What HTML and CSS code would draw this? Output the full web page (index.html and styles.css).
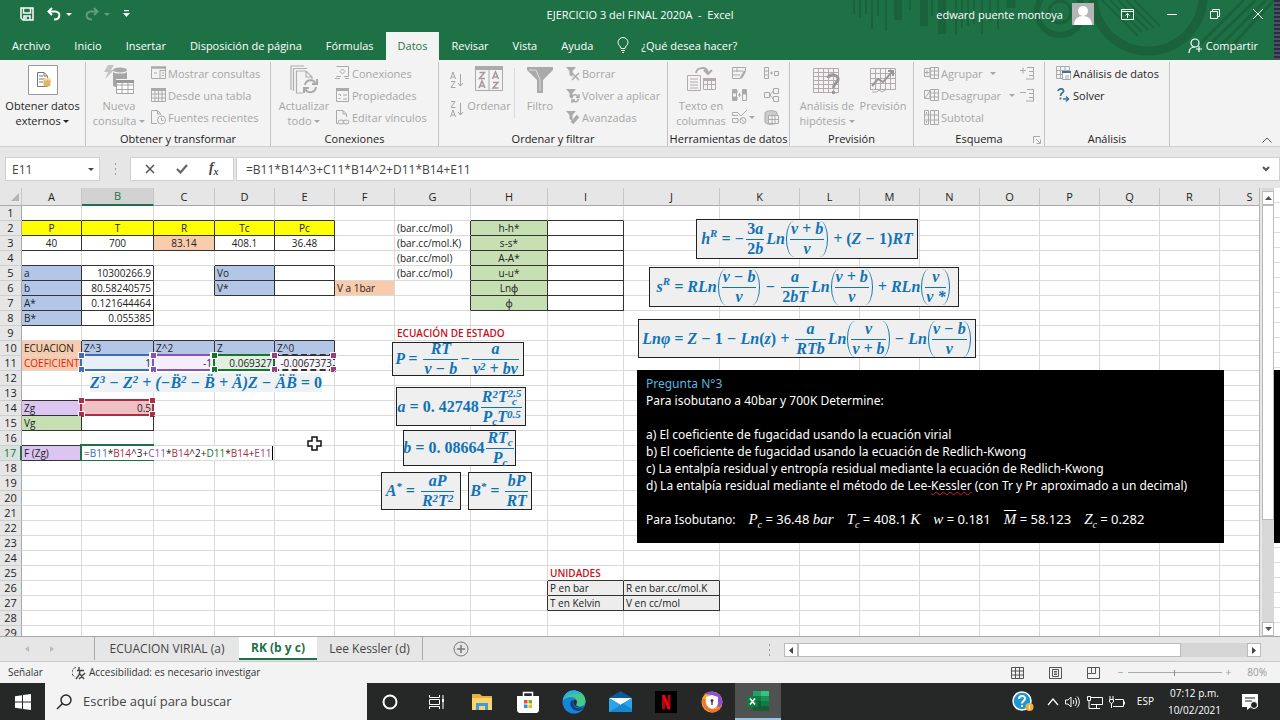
FILE: index.html
```html
<!DOCTYPE html>
<html lang="es">
<head>
<meta charset="utf-8">
<title>EJERCICIO 3 del FINAL 2020A - Excel</title>
<link rel="stylesheet" href="styles.css">
</head>
<body>
<header class="top">
  <svg class="pattern" width="440" height="60" viewBox="0 0 440 60" fill="none" stroke="#1a623b">
    <path d="M14 0V14M20 0V18M26 0V14M32 0V29M38 0V16M46 0V31" stroke-width="2"/>
    <path d="M58 0V20M84 0V26M102 0V34" stroke-width="8"/>
    <path d="M70 0V10M92 0V16M116 0V35M122 0V28M128 0V26M134 0V24M142 0V34M150 0V22M158 0V29" stroke-width="2"/>
    <path d="M171 0V8" stroke-width="9"/>
    <circle cx="220" cy="12" r="23" stroke-width="6"/><circle cx="220" cy="12" r="11" stroke-width="3"/>
    <circle cx="308" cy="-4" r="55" stroke-width="9"/><path d="M262 0L298 36M270 0L302 32M278 0L308 30M286 0L314 28M294 0L320 26" stroke-width="2"/>
    <path d="M368 46L416 0M378 48L426 0M388 50L434 0M360 44L404 0" stroke-width="3"/>
    <path d="M434 0H440V60H434Z" fill="#4b5266" stroke="none"/><path d="M437 0V60" stroke="#2e2b45" stroke-width="6" stroke-dasharray="2 2"/>
  </svg>
  <div class="titlebar">
    <div class="quick">
      <button aria-label="Guardar"><svg width="14" height="14" viewBox="0 0 14 14" fill="none" stroke="#fff" stroke-width="1.500"><path d="M1 1H13V13H3L1 11ZM3.500 1V6H10.500V1M4 13V9H10V13M6 10V12"/></svg></button>
      <button aria-label="Deshacer"><svg width="14" height="14" viewBox="0 0 14 14" fill="none" stroke="#fff" stroke-width="2"><path d="M5 1L1.500 4.500L5 8M2 4.500H8C14 4.500 14 12.500 7 12.500"/></svg><b class="tri"></b></button>
      <button aria-label="Rehacer" class="dim"><svg width="14" height="14" viewBox="0 0 14 14" fill="none" stroke="#fff" stroke-width="2"><path d="M9 1L12.500 4.500L9 8M12 4.500H6C0 4.500 0 12.500 7 12.500"/></svg><b class="tri"></b></button>
      <button aria-label="Personalizar"><svg width="7" height="8" viewBox="0 0 7 8" fill="#fff"><path d="M1 0H6V1.200H1ZM0 3H7L3.500 7Z"/></svg></button>
    </div>
    <h1 class="doc">EJERCICIO 3 del FINAL 2020A &nbsp;-&nbsp; Excel</h1>
    <div class="account">
      <span>edward puente montoya</span>
      <svg class="avatar" width="22" height="22" viewBox="0 0 22 22"><path fill="#b5b5b5" d="M0 0H22V22H0Z"/><circle cx="11" cy="8" r="5" fill="#fff"/><path fill="#fff" d="M2 22C2 10 20 10 20 22Z"/></svg>
      <button aria-label="Opciones de cinta"><svg width="13" height="11" viewBox="0 0 13 11" fill="none" stroke="#fff"><path d="M.500 .500H12.500V10.500H.500ZM.500 2.500H12.500M6.500 9V4.500M4.500 6.500L6.500 4.500L8.500 6.500"/></svg></button>
      <button aria-label="Minimizar"><svg width="10" height="10" viewBox="0 0 10 10" stroke="#fff"><path d="M0 5.500H10"/></svg></button>
      <button aria-label="Restaurar"><svg width="10" height="10" viewBox="0 0 10 10" fill="none" stroke="#fff"><path d="M.500 2.500H7.500V9.500H.500ZM2.500 2.500V.500H9.500V7.500H7.500"/></svg></button>
      <button aria-label="Cerrar"><svg width="10" height="10" viewBox="0 0 10 10" stroke="#fff"><path d="M0 0L10 10M10 0L0 10"/></svg></button>
    </div>
  </div>
  <nav class="tabs">
    <button>Archivo</button><button>Inicio</button><button>Insertar</button><button>Disposición de página</button><button>Fórmulas</button><button class="on">Datos</button><button>Revisar</button><button>Vista</button><button>Ayuda</button>
    <button class="tell"><svg width="12" height="16" viewBox="0 0 12 16" fill="none" stroke="#fff"><path d="M4 11.500C4 9 1 8.500 1 5.500A5 5 0 0 1 11 5.500C11 8.500 8 9 8 11.500ZM4 13.500H8M5 15.500H7"/></svg>¿Qué desea hacer?</button>
    <button class="share"><svg width="14" height="15" viewBox="0 0 14 15" fill="none" stroke="#fff" stroke-width="1.200"><circle cx="7" cy="5" r="4"/><path d="M1 15C1 11 3 9 7 9M11 8V14M8 11H14"/></svg>Compartir</button>
  </nav>
</header>

<section class="ribbon">
  <div class="group g1"><div class="body">
    <button class="big"><svg width="30" height="30" viewBox="0 0 30 30" fill="none"><path d="M.500 .500H29.500V29.500H.500Z" fill="#fff" stroke="#999"/><path d="M9.500 7.500H16L19.500 11V21.500H9.500ZM16 7.500V11H19M11 11H15M11 14H16M11 17H15" stroke="#777"/><ellipse cx="19" cy="14" rx="3.500" ry="1.500" fill="#f4d79c"/><path d="M15.500 14V20C15.500 22 22.500 22 22.500 20V14C22 16 16 16 15.500 14" fill="#e4b55c"/></svg><span>Obtener datos<br>externos <b class="tri"></b></span></button>
  </div><h2>&nbsp;</h2></div>

  <div class="group g2"><div class="body">
    <button class="big" disabled><svg width="30" height="30" viewBox="0 0 30 30"><path d="M4 0H10L7 5H10L1 14L4 7H0Z" fill="#c4c4c4"/><ellipse cx="16" cy="5" rx="7" ry="2.500" fill="#aaa"/><path d="M9 7C11 9 21 9 23 7V14H12V22C10 22 9 21 9 20Z" fill="#a5a5a5"/><path d="M12.500 15.500H29.500V28.500H12.500ZM12.500 20H29.500M12.500 24.500H29.500M18 16V29M24 16V29" fill="#fff" stroke="#a5a5a5"/><path d="M12 15H30V18H12Z" fill="#999"/></svg><span>Nueva<br>consulta <b class="tri"></b></span></button>
    <div class="stack">
      <button disabled><svg width="15" height="14" viewBox="0 0 15 14" fill="none" stroke="#aaa"><path d="M.500 1.500H14.500V12.500H.500ZM9 4.500H14M9 4V12M11 7H13M11 9.500H13M3 7H6"/><path d="M0 1.500H15" stroke-width="2.500"/></svg>Mostrar consultas</button>
      <button disabled><svg width="15" height="14" viewBox="0 0 15 14" fill="none" stroke="#aaa"><path d="M.500 1.500H14.500V13.500H.500ZM0 6H15M0 10H15M4 2V14M7.500 2V14M11 2V14"/><path d="M0 1.500H15" stroke-width="3"/></svg>Desde una tabla</button>
      <button disabled><svg width="15" height="15" viewBox="0 0 15 15" fill="none" stroke="#aaa"><path d="M6 13.500H.500V.500H6.500L9.500 3.500V5M6.500 .500V4H9"/><circle cx="10.500" cy="10" r="4"/><path d="M10.500 7.500V10.500H12.500"/></svg>Fuentes recientes</button>
    </div>
  </div><h2>Obtener y transformar</h2></div>

  <div class="group g3"><div class="body">
    <button class="big" disabled><svg width="30" height="30" viewBox="0 0 30 30" fill="none" stroke="#b0b0b0" stroke-width="1.200"><path d="M2 25V1H15M4.500 26V3.500H18M14 28H7.500V6H17L23 12V14M17 6V12H23"/><path d="M16 20C17 14 25 14 26 18M28 14V19H23M27 22C26 28 19 29 16 24M15 28V23H20" stroke="#aaa" stroke-width="2"/></svg><span>Actualizar<br>todo <b class="tri"></b></span></button>
    <div class="stack">
      <button disabled><svg width="15" height="14" viewBox="0 0 15 14" fill="none" stroke="#aaa"><path d="M1.500 .500H13.500V10.500H9M6 10.500H1.500ZM5 12.500H0M10 12.500H14M7.500 3L10 5.500L7.500 8L5 5.500Z"/></svg>Conexiones</button>
      <button disabled><svg width="15" height="14" viewBox="0 0 15 14" fill="none" stroke="#aaa"><path d="M1.500 1.500H13.500V13.500H1.500ZM3.500 6.500H5.500V8M3.500 10.500H5.500M8 7H12M8 11H12"/><path d="M1 1.500H14" stroke-width="3"/></svg>Propiedades</button>
      <button disabled><svg width="15" height="15" viewBox="0 0 15 15" fill="none" stroke="#aaa"><path d="M3 13.500H1.500V.500H8L11.500 4V7M8 .500V4H11"/><ellipse cx="6" cy="12" rx="3" ry="2"/><ellipse cx="11" cy="12" rx="3" ry="2"/></svg>Editar vínculos</button>
    </div>
  </div><h2>Conexiones</h2></div>

  <div class="group g4"><div class="body">
    <div class="stack az">
      <button disabled aria-label="Ordenar de A a Z"><svg width="14" height="18" viewBox="0 0 14 18" fill="none" stroke="#a9a2a8"><path d="M.500 8L3 1L5.500 8M1.500 6H4.500M1 10.500H5L1 16.500H5.500M10.500 3V15M8 12L10.500 15L13 12"/></svg></button>
      <button disabled aria-label="Ordenar de Z a A"><svg width="14" height="18" viewBox="0 0 14 18" fill="none" stroke="#a9a2a8"><path d="M1 1.500H5L1 7.500H5.500M.500 17L3 10L5.500 17M1.500 15H4.500M10.500 3V15M8 12L10.500 15L13 12"/></svg></button>
    </div>
    <button class="big" disabled><svg width="28" height="30" viewBox="0 0 28 30" fill="none" stroke="#aaa"><path d="M.500 2.500H27.500V25.500H.500ZM14 5V25"/><path d="M0 3H28" stroke-width="4"/><path d="M4.500 7.500H9.500L4.500 13.500H10M4 23L7 16L10 23M5 21H9M17.500 14L20.500 7L23.500 14M18.500 12H22.500M18 17.500H23L18 23H23.500" stroke="#a7969f" stroke-width="1.500"/></svg><span>Ordenar</span></button>
    <i class="rule"></i>
    <button class="big" disabled><svg width="28" height="30" viewBox="0 0 28 30"><path d="M1 2H27V5L17 15V28H11V15L1 5Z" fill="#aaa"/><path d="M3 5H10L14 15V26" fill="none" stroke="#ddd"/></svg><span>Filtro</span></button>
    <div class="stack">
      <button disabled><svg width="15" height="15" viewBox="0 0 15 15" fill="none" stroke="#aaa" stroke-width="1.500"><path d="M1 1H11L7.500 5V11L4.500 9V5Z" fill="#aaa" stroke="none"/><path d="M7 7L14 14M14 7L7 14"/></svg>Borrar</button>
      <button disabled><svg width="15" height="15" viewBox="0 0 15 15" fill="none" stroke="#aaa" stroke-width="1.500"><path d="M1 1H11L7.500 5V11L4.500 9V5Z" fill="#aaa" stroke="none"/><path d="M7 10C7 6 12 6 13 9M14 6V9.500H11M13.500 11C13 15 8 14 7.500 12M7 15V12H10"/></svg>Volver a aplicar</button>
      <button disabled><svg width="15" height="15" viewBox="0 0 15 15" fill="none" stroke="#aaa"><path d="M1 1H11L7.500 5V11L4.500 9V5Z" fill="#aaa" stroke="none"/><path d="M13 6L7 13" stroke-width="3.500"/></svg>Avanzadas</button>
    </div>
  </div><h2>Ordenar y filtrar</h2></div>

  <div class="group g5"><div class="body">
    <button class="big" disabled><svg width="30" height="30" viewBox="0 0 30 30" fill="none" stroke="#b3aab0"><path d="M1.500 10.500H14.500V25.500H1.500ZM4 14H12M4 17H12M4 20H12M4 23H12M17.500 14.500H29.500V24.500H17.500ZM17 19.500H30M21.500 15V24M25.500 15V24"/><path d="M17 14.500H30" stroke-width="3"/><path d="M10 8C11 2 21 1 22 8M18 5L22 9L26 5" stroke="#aaa" stroke-width="2"/></svg><span>Texto en<br>columnas</span></button>
    <div class="stack icons">
      <button disabled aria-label="Relleno rápido"><svg width="15" height="14" viewBox="0 0 15 14" fill="none" stroke="#aaa"><path d="M.500 1.500H13.500V5M.500 1.500V12.500H9M1 5H11M1 9H8M5 2V6"/><path d="M13 5L9 12" stroke-width="2.500"/></svg></button>
      <button disabled aria-label="Quitar duplicados"><svg width="15" height="14" viewBox="0 0 15 14" fill="none" stroke="#aaa"><path d="M.500 1.500H4.500V12.500H.500ZM10.500 1.500H14.500V12.500H10.500ZM6 7H9M7.500 5V9"/><path d="M1 2H5V5H1ZM1 9H5V12H1ZM11 2H14V6H11Z" fill="#aaa"/></svg></button>
      <button disabled aria-label="Validación de datos"><svg width="15" height="14" viewBox="0 0 15 14" fill="none" stroke="#aaa"><path d="M6 2.500H.500V5.500H6M.500 8.500H6V12.500H.500ZM6 3L9 6L15 0"/><circle cx="11" cy="10.500" r="3"/><path d="M9 8.500L13 12.500"/></svg><b class="tri"></b></button>
    </div>
    <div class="stack icons">
      <button disabled aria-label="Consolidar"><svg width="15" height="14" viewBox="0 0 15 14" fill="none" stroke="#aaa"><path d="M.500 1.500H4.500V12.500H.500ZM1 5H4M1 9H4M6 7H9M7.500 5.500V8.500M10.500 5.500H14.500V9.500H10.500Z"/></svg></button>
      <button disabled aria-label="Relaciones"><svg width="15" height="14" viewBox="0 0 15 14" fill="none" stroke="#aaa"><path d="M.500 4.500H5.500V9.500H.500ZM9.500 .500H14.500V5.500H9.500ZM9.500 8.500H14.500V13.500H9.500ZM6 7L9 3M6 7L9 11"/></svg></button>
      <button disabled aria-label="Modelo de datos"><svg width="15" height="15" viewBox="0 0 15 15" fill="none" stroke="#aaa"><path d="M1 3C1 0 13 0 13 3V12C13 15 1 15 1 12Z" fill="#ccc"/><path d="M4.500 5.500H14.500V13.500H4.500ZM5 9.500H14M8 6V13M11 6V13" fill="#f3f3f3"/></svg></button>
    </div>
  </div><h2>Herramientas de datos</h2></div>

  <div class="group g6"><div class="body">
    <button class="big" disabled><svg width="28" height="30" viewBox="0 0 28 30" fill="none" stroke="#b3aab0"><path d="M.500 3.500H25.500V27.500H.500ZM0 7.500H26M0 11.500H26M0 15.500H26M0 19.500H26M0 23.500H26M5.500 3V27M10.500 3V27M15.500 3V27M20.500 3V27"/><path d="M15 13C16 8 26 9 25 15C24 18 20 19 20.500 23M20.500 26V29" stroke="#999" stroke-width="3"/></svg><span>Análisis de<br>hipótesis <b class="tri"></b></span></button>
    <button class="big" disabled><svg width="28" height="30" viewBox="0 0 28 30" fill="none" stroke="#b3aab0"><path d="M1.500 3.500H26.500V24.500H1.500ZM1 8.500H27M1 13.500H27M1 18.500H27M6.500 3V24M11.500 3V24M16.500 3V24M21.500 3V24M3 27H8L10 25L13 27L18 24"/><path d="M3 21L9 14L14 17L24 6M19 6H24V11" stroke="#999" stroke-width="2"/></svg><span>Previsión</span></button>
  </div><h2>Previsión</h2></div>

  <div class="group g7"><div class="body">
    <div class="stack">
      <button disabled><svg width="15" height="14" viewBox="0 0 15 14" fill="none" stroke="#aaa"><path d="M.500 2.500H6V10.500H.500ZM3 4.500V8.500M1 6.500H5M6.500 1.500H14.500V12.500H6.500ZM7 5H14M7 9H14M10.500 2V12"/></svg>Agrupar &nbsp; <b class="tri"></b></button>
      <button disabled><svg width="15" height="14" viewBox="0 0 15 14" fill="none" stroke="#aaa"><path d="M.500 2.500H6V10.500H.500ZM1 10L6 3M6.500 1.500H14.500V12.500H6.500ZM7 5H14M7 9H14M10.500 2V12"/></svg>Desagrupar &nbsp;<b class="tri"></b></button>
      <button disabled><svg width="15" height="15" viewBox="0 0 15 15" fill="none" stroke="#aaa"><path d="M.500 .500H4.500V14.500H.500ZM6.500 .500H14.500V14.500H6.500ZM0 5H15M0 10H15M10.500 1V15M2.500 2V4M2.500 11V13"/></svg>Subtotal</button>
    </div>
    <div class="stack end">
      <button disabled aria-label="Mostrar detalle"><svg width="14" height="14" viewBox="0 0 14 14" fill="none" stroke="#aaa"><path d="M0 4.500H6M3 1.500V7.500M7 1.500H14M9 5.500H14M9 9.500H14M6 13H14M13.500 1V13"/></svg></button>
      <button disabled aria-label="Ocultar detalle"><svg width="14" height="14" viewBox="0 0 14 14" fill="none" stroke="#aaa"><path d="M0 4.500H6M7 1.500H14M9 5.500H14M9 9.500H14M6 13H14M13.500 1V13"/></svg></button>
    </div>
  </div><h2>Esquema</h2><svg class="launch" width="8" height="8" viewBox="0 0 8 8" fill="none" stroke="#aaa"><path d="M.500 7V.500H7M3 3L7 7M7.500 3.500V7.500H3.500"/></svg></div>

  <div class="group g8"><div class="body">
    <div class="stack">
      <button><svg width="15" height="14" viewBox="0 0 15 14" fill="none" stroke="#aaa"><path d="M.500 .500H13.500V12.500H.500ZM0 4.500H14M0 8.500H14M4.500 0V12M9 0V5"/><path d="M6.500 5.500H14.500V13.500H6.500Z" fill="#fff"/><path d="M6 6H15" stroke="#41719c" stroke-width="2"/><path d="M9 10H13M9 12H13"/></svg>Análisis de datos</button>
      <button><svg width="15" height="14" viewBox="0 0 15 14" fill="none" stroke="#41719c" stroke-width="1.800"><path d="M2 3C3 0 8 0 7.500 3.500C7 5 4.500 5 4.500 8M4.500 9.500V11.500"/><path d="M7 11H12M10 8.500L12.500 11L10 13.500" stroke-width="1.500"/></svg>Solver</button>
    </div>
  </div><h2>Análisis</h2></div>
  <button class="fold" aria-label="Contraer la cinta"><svg width="10" height="6" viewBox="0 0 10 6" fill="none" stroke="#555"><path d="M.500 5.500L5 1L9.500 5.500"/></svg></button>
</section>

<section class="formula">
  <div class="name"><input aria-label="Cuadro de nombres" value="E11"><b class="tri"></b></div>
  <svg class="grip" width="3" height="12" viewBox="0 0 3 12" fill="#999"><path d="M1 0H2V2H1ZM1 5H2V7H1ZM1 10H2V12H1Z"/></svg>
  <div class="fx">
    <button aria-label="Cancelar"><svg width="10" height="10" viewBox="0 0 10 10" stroke="#555" stroke-width="1.500"><path d="M1 1L9 9M9 1L1 9"/></svg></button>
    <button aria-label="Introducir"><svg width="12" height="10" viewBox="0 0 12 10" fill="none" stroke="#666" stroke-width="2.200"><path d="M1 5L4.500 8.500L11 1"/></svg></button>
    <button aria-label="Insertar función"><i>f</i><sub>x</sub></button>
  </div>
  <div class="entry"><input aria-label="Barra de fórmulas" value="=B11*B14^3+C11*B14^2+D11*B14+E11"><svg width="8" height="6" viewBox="0 0 8 6" fill="none" stroke="#555" stroke-width="2"><path d="M1 1L4 4L7 1"/></svg></div>
</section>

<main class="sheet">
  <div class="grid">
    <table id="cells"></table>

    <div class="eq plain" id="cubic">Z<sup>3</sup> − Z<sup>2</sup> + (−<u>B̈</u><sup>2</sup> − B̈ + Ä)Z − ÄB̈ = <s>0</s></div>

    <div class="eq" id="hr">h<sup>R</sup> = −<span class="fr"><span><s>3</s>a</span><span><s>2</s>b</span></span>Ln<span class="par"><span class="fr"><span>v + b</span><span>v</span></span></span> + <s>(</s>Z − <s>1)</s>RT</div>
    <div class="eq" id="sr">s<sup>R</sup> = RLn<span class="par"><span class="fr"><span>v − b</span><span>v</span></span></span> − <span class="fr"><span>a</span><span><s>2</s>bT</span></span>Ln<span class="par"><span class="fr"><span>v + b</span><span>v</span></span></span> + RLn<span class="par"><span class="fr"><span>v</span><span>v *</span></span></span></div>
    <div class="eq" id="lnphi">Lnφ = Z − <s>1</s> − Ln<s>(</s>z<s>)</s> + <span class="fr"><span>a</span><span>RTb</span></span>Ln<span class="par"><span class="fr"><span>v</span><span>v + b</span></span></span> − Ln<span class="par"><span class="fr"><span>v − b</span><span>v</span></span></span></div>
    <div class="eq" id="state">P = <span class="fr"><span>RT</span><span>v − b</span></span>−<span class="fr"><span>a</span><span>v<sup>2</sup> + bv</span></span></div>
    <div class="eq" id="aconst">a = <s>0. 42748</s><span class="fr"><span>R<sup>2</sup>T<span class="ss"><b>2.5</b><b>c</b></span></span><span>P<sub>c</sub>T<sup>0.5</sup></span></span></div>
    <div class="eq" id="bconst">b = <s>0. 08664</s><span class="fr"><span>RT<sub>c</sub></span><span>P<sub>c</sub></span></span></div>
    <div class="eq" id="astar">A<sup>*</sup> = <span class="fr"><span>aP</span><span>R<sup>2</sup>T<sup>2</sup></span></span></div>
    <div class="eq" id="bstar">B<sup>*</sup> = <span class="fr"><span>bP</span><span>RT</span></span></div>

    <article class="question">
      <h3>Pregunta N°3</h3>
      <p>Para isobutano a 40bar y 700K Determine:</p>
      <p>&nbsp;</p>
      <p>a) El coeficiente de fugacidad usando la ecuación virial</p>
      <p>b) El coeficiente de fugacidad usando la ecuación de Redlich-Kwong</p>
      <p>c) La entalpía residual y entropía residual mediante la ecuación de Redlich-Kwong</p>
      <p>d) La entalpía residual mediante el método de Lee-<span class="typo">Kessler</span> (con Tr y Pr aproximado a un decimal)</p>
      <p>&nbsp;</p>
      <p class="data"><span class="lead">Para Isobutano:</span><span><i>P<sub>c</sub></i> = 36.48 <i>bar</i></span><span><i>T<sub>c</sub></i> = 408.1 <i>K</i></span><span><i>w</i> = 0.181</span><span><i class="over">M</i> = 58.123</span><span><i>Z<sub>c</sub></i> = 0.282</span></p>
    </article>
    <svg class="cross" width="15" height="15" viewBox="0 0 15 15" fill="#fff" stroke="#111" stroke-width="1.500"><path d="M5 1H10V5H14V10H10V14H5V10H1V5H5Z"/></svg>
  </div>
  <div class="vbar">
    <button aria-label="Arriba"><svg width="7" height="4" viewBox="0 0 7 4" fill="#555"><path d="M0 4L3.500 0L7 4Z"/></svg></button>
    <i></i><em></em>
    <button aria-label="Abajo"><svg width="7" height="4" viewBox="0 0 7 4" fill="#555"><path d="M0 0L3.500 4L7 0Z"/></svg></button>
  </div>
  <div class="edge"><i></i></div>
</main>

<nav class="sheets">
  <button class="arrow" aria-label="Anterior"><svg width="4" height="6" viewBox="0 0 4 6" fill="#bbb"><path d="M4 0V6L0 3Z"/></svg></button>
  <button class="arrow" aria-label="Siguiente"><svg width="4" height="6" viewBox="0 0 4 6" fill="#bbb"><path d="M0 0V6L4 3Z"/></svg></button>
  <button class="tab first">ECUACION VIRIAL (a)</button><button class="tab on">RK (b y c)</button><button class="tab last">Lee Kessler (d)</button>
  <button class="add" aria-label="Hoja nueva"><svg width="16" height="16" viewBox="0 0 16 16" fill="none" stroke="#777"><circle cx="8" cy="8" r="7"/><path d="M8 4V12M4 8H12" stroke-width="1.500"/></svg></button>
  <svg class="grip" width="3" height="12" viewBox="0 0 3 12" fill="#999"><path d="M1 0H2V2H1ZM1 5H2V7H1ZM1 10H2V12H1Z"/></svg>
  <div class="hbar">
    <button aria-label="Izquierda"><svg width="4" height="7" viewBox="0 0 4 7" fill="#444"><path d="M4 0V7L0 3.500Z"/></svg></button>
    <i></i><em></em>
    <button aria-label="Derecha"><svg width="4" height="7" viewBox="0 0 4 7" fill="#444"><path d="M0 0V7L4 3.500Z"/></svg></button>
  </div>
</nav>

<footer class="status">
  <span>Señalar</span>
  <span class="access"><svg width="14" height="14" viewBox="0 0 14 14" fill="none" stroke="#444"><path d="M4 1.500A5 5 0 0 0 3 11" stroke-dasharray="3 1"/><path d="M7 1V5M5 4.500H12M8 5L7 9L4 13M8 8L12 13M7 13L13 7" stroke-width="1.400"/></svg>Accesibilidad: es necesario investigar</span>
  <div class="views">
    <button aria-label="Normal"><svg width="13" height="12" viewBox="0 0 13 12" fill="none" stroke="#555"><path d="M.500 .500H12.500V11.500H.500ZM0 4H13M0 8H13M4.500 0V12M8.500 0V12"/></svg></button>
    <button aria-label="Diseño de página"><svg width="13" height="12" viewBox="0 0 13 12" fill="none" stroke="#555"><path d="M.500 .500H12.500V11.500H.500ZM3.500 2.500H9.500V9.500H3.500ZM5 4.500H8M5 6H8M5 7.500H8"/></svg></button>
    <button aria-label="Saltos de página"><svg width="13" height="12" viewBox="0 0 13 12" fill="none" stroke="#555"><path d="M.500 .500H12.500V11.500H.500ZM4.500 1V6.500H8.500V1M0 6.500H4"/></svg></button>
    <span>−</span><input type="range" aria-label="Zoom" min="10" max="190" value="100"><span>+</span><output>80%</output>
  </div>
</footer>

<footer class="taskbar">
  <button class="start" aria-label="Inicio"><svg width="16" height="16" viewBox="0 0 16 16" fill="#fff"><path d="M0 2.200L7 1.200V7.500H0ZM8 1L16 0V7.500H8ZM0 8.500H7V14.800L0 13.800ZM8 8.500H16V16L8 15Z"/></svg></button>
  <label class="search"><svg width="16" height="16" viewBox="0 0 16 16" fill="none" stroke="#222" stroke-width="1.400"><circle cx="10" cy="6" r="5"/><path d="M6.500 9.500L1 15"/></svg><input placeholder="Escribe aquí para buscar"></label>
  <div class="apps">
    <button aria-label="Cortana"><svg width="16" height="16" viewBox="0 0 16 16" fill="none" stroke="#fff" stroke-width="2"><circle cx="8" cy="8" r="6.500"/></svg></button>
    <button aria-label="Vista de tareas"><svg width="17" height="16" viewBox="0 0 17 16" fill="none" stroke="#fff"><path d="M1.500 1V3.500H11.500V1M1.500 15V12.500H11.500V15M1.500 5.500H11.500V10.500H1.500ZM15 1V15"/><path d="M14 5H16V8H14Z" fill="#fff" stroke="none"/></svg></button>
    <button aria-label="Explorador"><svg width="21" height="18" viewBox="0 0 21 18"><path d="M0 1H8L10 3H20V17H0Z" fill="#e9b040"/><path d="M0 5H20V17H0Z" fill="#fbd569"/><path d="M4 17V10H16V17H13V13H7V17Z" fill="#3f9be0"/></svg></button>
    <button aria-label="Tienda"><svg width="22" height="22" viewBox="0 0 22 22"><path d="M6.500 7V1.500H15.500V7" fill="none" stroke="#fff" stroke-width="1.500"/><path d="M0 5H22V20L20 22H2L0 20Z" fill="#fff"/><path d="M7 9H10.500V12.500H7Z" fill="#e74c2e"/><path d="M11.500 9H15V12.500H11.500Z" fill="#7ab51d"/><path d="M7 13.500H10.500V17H7Z" fill="#199ce0"/><path d="M11.500 13.500H15V17H11.500Z" fill="#f3b61f"/></svg></button>
    <button aria-label="Edge"><svg width="24" height="24" viewBox="0 0 24 24"><circle cx="12" cy="12" r="11.500" fill="#1585d8"/><path d="M1 10C3-3 23-2 23.500 11C24 16 17 18 14 15C17 11 13 7 9 7C5 7 2 9 1 10Z" fill="#45c88a"/><path d="M1 10C3-1 15-2 19 4C12 3 5 5 1 10Z" fill="#2bb2d8"/><path d="M9 11C7 15 10 21 17 21C20 20 22 18 22 17C18 20 9 18 12 11C11 10 10 10 9 11Z" fill="#123f86"/><path d="M12 10C16 9 15 13 14 15C16 18 20 17 22 16C19 19 10 18 12 10Z" fill="#2b2b2b"/></svg></button>
    <button aria-label="Correo"><svg width="23" height="21" viewBox="0 0 23 21"><path d="M0 7L11.500 0L23 7V20H0Z" fill="#0c5a9e"/><path d="M0 7H23L11.500 14Z" fill="#f4fbff"/><path d="M0 7L11.500 14L23 7V21H0Z" fill="#2fa3ea"/><path d="M0 21L14 12.500L23 18V21Z" fill="#1887d2"/></svg></button>
    <button aria-label="Netflix"><svg width="22" height="22" viewBox="0 0 22 22"><path d="M0 0H22V22H0Z" fill="#000"/><path d="M7 4H10V18L7 18.500ZM12.500 4H15.500V18.500L12.500 18Z" fill="#b1060f"/><path d="M7 4H10L15.500 18.500L12.500 18Z" fill="#e50914"/></svg></button>
    <button aria-label="Navegador privado"><svg width="22" height="22" viewBox="0 0 22 22"><circle cx="11" cy="11" r="10.500" fill="#f7a928"/><path d="M3 3C8-2 21 0 21.500 11C21 15 18 16 16 17C19 10 14 3 3 3Z" fill="#8b50dc"/><path d="M1 8C1 18 8 21 11 21.500C18 21 20 17 21 14C14 22 4 18 4 8Z" fill="#f1713b"/><path d="M11 4L17 6V11C17 15 14 17 11 18C8 17 5 15 5 11V6Z" fill="#fff"/><circle cx="11" cy="9.500" r="1.500" fill="#40306b"/><path d="M10.300 10H11.700V14H10.300Z" fill="#40306b"/></svg></button>
    <button class="on" aria-label="Excel"><svg width="22" height="20" viewBox="0 0 22 20"><path d="M6 0H14V5H6Z" fill="#21a366"/><path d="M14 0H22V5H14Z" fill="#33c481"/><path d="M6 5H14V10H6Z" fill="#107c41"/><path d="M14 5H22V15H14Z" fill="#1d9058"/><path d="M6 10H22V20H6Z" fill="#185c37"/><path d="M14 10H22V15H14Z" fill="#107c41"/><path d="M0 5H11V16H0Z" fill="#107c41"/><path d="M3 7.500L8 13.500M8 7.500L3 13.500" stroke="#fff" stroke-width="1.600"/></svg></button>
  </div>
  <div class="tray">
    <svg class="help" width="22" height="22" viewBox="0 0 22 22"><circle cx="10" cy="10" r="9" fill="#1d96d6" stroke="#fff" stroke-width="1.500"/><path d="M7 8C7 4 13 4 13 7.500C13 10 10 10 10 12.500M10 14V16" fill="none" stroke="#fff" stroke-width="2"/><circle cx="17.500" cy="16" r="4" fill="#f3b13a"/><path d="M17.500 14V18" stroke="#fff"/></svg>
    <svg width="12" height="8" viewBox="0 0 12 8" fill="none" stroke="#fff" stroke-width="1.200"><path d="M1 7L6 1L11 7"/></svg>
    <svg width="16" height="14" viewBox="0 0 16 14" fill="none" stroke="#fff"><path d="M.500 5V9H3L6 12V2L3 5ZM8 5C9 6 9 8 8 9M10 3C12 5 12 9 10 11M12 1.500C15 4 15 10 12 12.500"/></svg>
    <svg width="16" height="14" viewBox="0 0 16 14" fill="none" stroke="#fff"><path d="M4 2.500H15.500V9.500H4M9.500 10V13M6 13.500H13M.500 1.500H3.500V5.500H.500ZM2 6V13.500H6"/></svg>
    <svg width="16" height="12" viewBox="0 0 16 12" fill="none" stroke="#fff"><path d="M6 3.500H14.500V10.500H4M15.500 5.500V8.500M1 0V3M4 0V3M.500 3.500H4.500V6L2.500 7.500L.500 6ZM2.500 7V12"/></svg>
    <span class="lang">ESP</span>
    <time>07:12 p.m.<br>10/02/2021</time>
    <svg width="16" height="16" viewBox="0 0 16 16"><path d="M0 0H16V13H9L5 16V13H0Z" fill="#fff"/><path d="M3 4H13M3 7H10" stroke="#222"/><circle cx="12" cy="11" r="3.500" fill="#222" stroke="#fff"/></svg>
  </div>
</footer>
<script src="script.js"></script>
</body>
</html>
```
FILE: styles.css
```css
* { box-sizing: border-box; }
body { margin: 0; height: 100vh; display: flex; flex-direction: column; overflow: hidden; font: 11px/15px "Open Sans", "Noto Sans", sans-serif; color: #262626; background: #e6e6e6; }
button, input { font: inherit; color: inherit; border: 0; background: none; padding: 0; margin: 0; outline: 0; }
h1, h2, h3, p { margin: 0; font: inherit; }
svg { flex: none; display: block; }
.tri { display: inline-block; width: 0; height: 0; border: 3px solid transparent; border-top-color: currentColor; border-bottom: 0; vertical-align: 2px; }

/* title bar and tabs */
.top { position: relative; background: #1e7145; color: #fff; flex: none; }
.pattern { position: absolute; right: 0; top: 0; }
.titlebar { position: relative; height: 32px; display: grid; grid-template-columns: 1fr auto 1fr; align-items: center; padding-bottom: 4px; }
.quick { display: flex; align-items: center; gap: 13px; padding-left: 20px; }
.quick button { display: flex; align-items: center; gap: 5px; }
.dim { opacity: .3; }
.account { display: flex; align-items: center; justify-content: flex-end; gap: 33px; padding-right: 17px; }
.account .avatar { margin-left: -24px; margin-right: -6px; }
.tabs { position: relative; display: flex; height: 28px; }
.tabs button { padding: 0 12px 2px; white-space: nowrap; }
.tabs .on { background: #f3f3f3; color: #1e7145; }
.tabs .tell, .tabs .share { display: flex; align-items: center; gap: 12px; }
.tabs .share { margin-left: auto; gap: 4px; margin-right: 10px; }

/* ribbon */
.ribbon { position: relative; height: 87px; flex: none; display: flex; background: #f3f3f3; border-bottom: 1px solid #cfcfcf; padding-top: 2px; }
.group { position: relative; height: 84px; border-right: 1px solid #c2c2c2; display: flex; flex-direction: column; flex: none; }
.group h2 { text-align: center; color: #222; line-height: 14px; white-space: nowrap; }
.body { flex: 1; display: flex; }
.g1 { width: 86px; } .g2 { width: 185px; } .g3 { width: 168px; } .g4 { width: 229px; }
.g5 { width: 122px; } .g6 { width: 124px; } .g7 { width: 131px; } .g8 { width: 125px; }
.ribbon button:disabled { color: #a6a6a6; }
.big { display: flex; flex-direction: column; align-items: center; gap: 3px; white-space: nowrap; padding-top: 3px; }
.g1 .big { width: 100%; }
.g2 .big { width: 62px; margin: 0 1px 0 2px; }
.g3 .big { width: 62px; margin: 0 0 0 2px; }
.stack { display: flex; flex-direction: column; }
.stack button { display: flex; align-items: center; gap: 2px; height: 22px; white-space: nowrap; }
.g4 .az { padding: 6px 0 0 11px; gap: 5px; }
.g4 .az button { height: 24px; }
.g4 .big { width: 50px; }
.rule { width: 1px; height: 50px; background: #dadada; margin-top: 6px; }
.g5 .big { width: 50px; margin-left: 8px; }
.icons { width: 33px; padding-left: 6px; }
.g5 .icons + .icons { width: 26px; padding-left: 5px; }
.g6 .body { padding-left: 8px; }
.g6 .big { width: 58px; }
.g6 .big + .big { width: 54px; }
.g7 .body { padding: 0 10px; justify-content: space-between; }
.g8 .body { padding-left: 11px; }
.launch { position: absolute; right: 3px; bottom: 2px; }
.fold { position: absolute; right: 8px; bottom: 3px; }

/* formula bar */
.formula { flex: none; height: 41px; display: flex; align-items: flex-start; padding: 10px 0 0 5px; color: #444; font-size: 12px; }
.formula > div { height: 24px; background: #fff; border: 1px solid #d0d0d0; display: flex; align-items: center; }
.name { width: 95px; padding: 0 6px; }
.name input { width: 76px; flex: 1; }
.formula .grip { margin: 6px 13px 0 14px; }
.fx { width: 104px; justify-content: space-around; padding: 0 4px; }
.fx i { font: italic bold 14px "Liberation Serif", serif; } .fx sub { font: italic bold 10px "Liberation Serif", serif; }
.entry { flex: 1; margin-left: 2px; padding: 0 9px; }
.entry input { flex: 1; }

/* worksheet */
.sheet { flex: 1; min-height: 0; display: flex; overflow: hidden; }
.grid { position: relative; flex: 1; overflow: hidden; background: #fff; border-right: 1px solid #b5b5b5; }
.grid table { table-layout: fixed; border-collapse: separate; border-spacing: 0; width: 1px; font: 10px/14px "Open Sans", "Noto Sans", sans-serif; color: #222; }
.grid th { height: 18px; padding: 0; font-weight: 400; font-size: 11px; line-height: 14px; background: #e6e6e6; border-right: 1px solid #c6c6c6; border-bottom: 1px solid #a8a8a8; }
.grid tbody th { height: 15px; border-bottom-color: #cfcfcf; border-right-color: #a8a8a8; }
.grid thead .sel { background: #d2d2d2; color: #1e7145; border-bottom: 2px solid #1e7145; }
.grid tbody .sel { background: #d9e2dc; color: #1e7145; border-right: 2px solid #1e7145; }
.grid td { position: relative; height: 15px; padding: 0 2px; white-space: nowrap; border-right: 1px solid #dadada; border-bottom: 1px solid #dadada; }
.corner { margin-left: auto; margin-right: 2px; }
.grid .kr { border-right-color: #333; } .grid .kb { border-bottom-color: #333; }
.c { text-align: center; } .r { text-align: right; } .clip { overflow: hidden; }
.yellow { background: #ff0; } .peach { background: #f8cbad; } .blue { background: #b4c6e7; } .green { background: #c6e0b4; }
.lilac { background: #dcc5f0; } .gray { background: #ededed; }
.t1 { background: #e6effa; } .t2 { background: #f3eefa; } .t3 { background: #e2f0e2; } .t4 { background: #f8f4f9; } .t5 { background: #efc0c6; }
.red { color: #e0241b; } .bred { color: #c8101c; font-weight: 600; }
.range { position: absolute; inset: -2px -1px -1px -2px; border: 2px solid; }
.range i { position: absolute; width: 5px; height: 5px; background: currentColor; outline: 1px solid #fff; }
.range i:nth-child(1) { left: -3px; top: -3px; } .range i:nth-child(2) { right: -3px; top: -3px; }
.range i:nth-child(3) { left: -3px; bottom: -3px; } .range i:nth-child(4) { right: -3px; bottom: -3px; }
.r1 { color: #3f6dbb; } .r2 { color: #8355b5; } .r3 { color: #12762d; } .r4 { color: #9a3d7c; } .r4.range { border: 2px dashed #333; } .r5 { color: #a82f45; }
.edit { position: absolute; left: 0; top: 0; z-index: 2; height: 14px; padding: 0 1px 0 2px; background: #fff; border-right: 1px solid #000; color: #222; }
.live { position: absolute; inset: -2px -1px -1px -2px; border: 2px solid #1e7145; }

/* floating equations */
.eq { position: absolute; display: flex; align-items: center; justify-content: center; white-space: pre; background: #efefef; border: 1px solid #222; color: #1173b5; font: italic bold 16px/16px "Liberation Serif", serif; }
.eq s { font-style: normal; text-decoration: none; } .eq u { text-decoration: none; }
.eq sup, .eq sub { font-size: 11px; line-height: 8px; }
.eq > sup { align-self: flex-start; margin-top: 9px; }
.plain { border: 0; background: #eef2f4; }
.plain > sup { margin-top: 2px; }
.fr { display: inline-flex; flex-direction: column; align-items: center; margin: 0 2px; }
.fr > span { padding: 0 1px; height: 18px; align-self: stretch; text-align: center; }
.fr > span + span { border-top: 1px solid #1173b5; padding-top: 1px; }
.fr sup { vertical-align: 4px; }
.fr sub { vertical-align: -3px; }
.par { border: 1px solid #1173b5; border-top: 0; border-bottom: 0; border-radius: 8px / 18px; margin: 0 1px; }
.par .fr { margin: 0 3px; display: flex; }
.ss { display: inline-flex; flex-direction: column; vertical-align: 5px; height: 8px; font-size: 11px; line-height: 8px; }
#cubic { left: 90px; top: 185px; width: 232px; height: 19px; }
#hr { left: 696px; top: 31px; width: 222px; height: 40px; }
#sr { left: 649px; top: 79px; width: 310px; height: 40px; }
#lnphi { left: 638px; top: 131px; width: 338px; height: 39px; }
#state { left: 392px; top: 154px; width: 132px; height: 34px; }
#aconst { left: 396px; top: 199px; width: 130px; height: 39px; }
#bconst { left: 403px; top: 242px; width: 113px; height: 36px; }
#astar { left: 381px; top: 284px; width: 80px; height: 38px; }
#bstar { left: 468px; top: 284px; width: 64px; height: 38px; }
.question { position: absolute; left: 637px; top: 182px; width: 587px; height: 173px; padding: 5px 9px; background: #000; color: #fff; font: 12px/17px "Noto Sans", "Open Sans", sans-serif; white-space: nowrap; }
.question h3 { color: #5bb5e0; }
.typo { text-decoration: underline wavy #d22 1px; }
.data { display: flex; gap: 13px; font-size: 13px; }
.lead { font-size: 12px; }
.data i { font: italic 15px/17px "Liberation Serif", serif; } .data sub { font-size: 10px; line-height: 8px; }
.over { text-decoration: overline; }
.cross { position: absolute; left: 307px; top: 248px; }
.vbar { width: 12px; margin-left: 2px; display: flex; flex-direction: column; background: #d8d8d8; padding-top: 3px; }
.vbar button, .hbar button { background: #fff; border: 1px solid #bbb; display: flex; align-items: center; justify-content: center; }
.vbar button { height: 14px; }
.vbar i { flex: 315; background: #fff; border: 1px solid #bbb; } .vbar em { flex: 102; }
.edge { width: 6px; background: repeating-linear-gradient(#fff 0 14px, #ddd 14px 15px); padding-top: 182px; }
.edge i { display: block; height: 173px; background: #000; }

/* sheet tabs */
.sheets { flex: none; height: 26px; display: flex; align-items: flex-start; border-top: 1px solid #a8a8a8; border-bottom: 1px solid #c9c9c9; font-size: 12px; color: #444; }
.sheets .arrow { width: 4px; height: 24px; margin-left: 25px; display: flex; align-items: center; }
.sheets .arrow + .arrow { margin-left: 21px; }
.tab { height: 23px; }
.first { width: 145px; margin-left: 40px; border-left: 1px solid #aaa; }
.tab.on { width: 78px; background: #fff; color: #1e7145; font-weight: 700; border-bottom: 2px solid #1e7145; }
.last { width: 106px; border-right: 1px solid #aaa; }
.add { margin: 4px 0 0 30px; }
.sheets .grip { margin: 7px 13px 0 auto; }
.hbar { width: 477px; height: 14px; display: flex; margin: 6px 19px 0 0; background: #d5d5d5; }
.hbar button { width: 14px; } .hbar i { flex: 384; background: #fff; border: 1px solid #bbb; } .hbar em { flex: 66; }

/* status bar */
.status { flex: none; height: 21px; display: flex; align-items: center; gap: 29px; padding: 0 13px 0 8px; background: #f3f3f3; font-size: 10px; color: #333; }
.access { display: flex; align-items: center; gap: 3px; }
.views { margin-left: auto; display: flex; align-items: center; color: #999; }
.views button { margin-right: 25px; }
.views button + button + button { margin-right: 18px; }
.views input { width: 94px; height: 10px; margin: 0 4px; appearance: none; background: linear-gradient(#aaa, #aaa) center / 100% 1px no-repeat; }
.views input::-webkit-slider-thumb { appearance: none; width: 1px; height: 6px; background: #888; }
.views output { margin-left: 16px; }

/* taskbar */
.taskbar { flex: none; height: 37px; display: flex; background: #262727; color: #fff; }
.start { width: 45px; display: flex; align-items: center; justify-content: center; }
.search { width: 322px; display: flex; align-items: center; gap: 11px; padding-left: 11px; background: #f3f3f3; color: #333; font-size: 13px; }
.search input { flex: 1; } .search input::placeholder { color: #444; opacity: 1; }
.apps { display: flex; }
.apps button { width: 46px; display: flex; align-items: center; justify-content: center; }
.apps .on { background: #505252; border-bottom: 2px solid #9bc3e4; }
.tray { margin-left: auto; display: flex; align-items: center; gap: 6px; padding-right: 22px; font-size: 10px; }
.help { margin-right: 7px; }
.lang { margin-left: 6px; }
.tray time { text-align: center; line-height: 17px; margin: 0 15px 0 8px; }
```
FILE: script.js
```js
const columns = {A: 60, B: 72, C: 61, D: 60, E: 60, F: 60, G: 76, H: 77, I: 76, J: 96, K: 80, L: 60, M: 60, N: 60, O: 60, P: 60, Q: 60, R: 60, S: 60};
const names = Object.keys(columns);

// cell -> [content, classes, range highlight]
const data = {
  A2: ['P', 'c yellow'], B2: ['T', 'c yellow'], C2: ['R', 'c yellow'], D2: ['Tc', 'c yellow'], E2: ['Pc', 'c yellow'],
  A3: ['40', 'c'], B3: ['700', 'c'], C3: ['83.14', 'c peach'], D3: ['408.1', 'c'], E3: ['36.48', 'c'],
  A5: ['a', 'blue'], B5: ['10300266.9', 'r'], A6: ['b', 'blue'], B6: ['80.58240575', 'r'],
  A7: ['A*', 'blue'], B7: ['0.121644464', 'r'], A8: ['B*', 'blue'], B8: ['0.055385', 'r'],
  D5: ['Vo', 'blue'], D6: ['V*', 'blue'], F6: ['V a 1bar', 'peach'],
  G2: ['(bar.cc/mol)', ''], G3: ['(bar.cc/mol.K)', ''], G4: ['(bar.cc/mol)', ''], G5: ['(bar.cc/mol)', ''],
  H2: ['h-h*', 'c green'], H3: ['s-s*', 'c green'], H4: ['A-A*', 'c green'], H5: ['u-u*', 'c green'], H6: ['Lnϕ', 'c green'], H7: ['ϕ', 'c green'],
  G9: ['ECUACIÓN DE ESTADO', 'bred'],
  A10: ['ECUACION', 'peach'], B10: ['Z^3', 'blue'], C10: ['Z^2', 'blue'], D10: ['Z', 'blue'], E10: ['Z^0', 'blue'],
  A11: ['COEFICIENT', 'peach red'], B11: ['1', 'r t1', 'r1'], C11: ['-1', 'r t2', 'r2'], D11: ['0.069327', 'r t3', 'r3'], E11: ['-0.0067373', 'r t4', 'r4'],
  A14: ['Zg', 'lilac'], B14: ['0.5', 'r t5', 'r5'], A15: ['Vg', 'green'], A17: ['F (Zg)', 'lilac'],
  I25: ['UNIDADES', 'bred'], I26: ['P en bar', 'gray'], J26: ['R en bar.cc/mol.K', 'gray'], I27: ['T en Kelvin', 'gray'], J27: ['V en cc/mol', 'gray']
};
const boxes = ['A2:E3', 'A5:B8', 'D5:E6', 'H2:I7', 'B10:E10', 'A14:B15', 'A17:A17', 'I26:J27'];

const edges = {};
const mark = (c, r, cls) => { const k = names[c] + r; (edges[k] = edges[k] || new Set()).add(cls); };
boxes.forEach(range => {
  const [from, to] = range.split(':').map(a => [names.indexOf(a[0]), +a.slice(1)]);
  for (let c = from[0]; c <= to[0]; c++) for (let r = from[1]; r <= to[1]; r++) {
    mark(c, r, 'kr'); mark(c, r, 'kb'); mark(c, r - 1, 'kb');
    if (c > 0) mark(c - 1, r, 'kr');
  }
});

const tokens = [['=', ''], ['B11', 'r1'], ['*', ''], ['B14', 'r5'], ['^3+', ''], ['C11', 'r2'], ['*', ''], ['B14', 'r5'], ['^2+', ''], ['D11', 'r3'], ['*', ''], ['B14', 'r5'], ['+', ''], ['E11', 'r4']];
data.B17 = ['<span class="live"></span><span class="edit">' + tokens.map(([t, k]) => `<span class="${k}">${t}</span>`).join('') + '</span>', ''];

let html = '<colgroup><col style="width:22px">' + names.map(n => `<col style="width:${columns[n]}px">`).join('') + '</colgroup>';
html += '<thead><tr><th><svg class="corner" width="8" height="8" viewBox="0 0 8 8" fill="#b5b5b5"><path d="M8 0V8H0Z"/></svg></th>' + names.map(n => `<th${n === 'B' ? ' class="sel"' : ''}>${n}</th>`).join('') + '</tr></thead><tbody>';
for (let r = 1; r <= 29; r++) {
  html += `<tr><th${r === 17 ? ' class="sel"' : ''}>${r}</th>`;
  for (const n of names) {
    const [text, cls, range] = data[n + r] || ['', ''];
    const frame = range ? `<span class="range ${range}"><i></i><i></i><i></i><i></i></span>` : '';
    html += `<td class="${[cls, ...(edges[n + r] || [])].join(' ').trim()}">${text}${frame}</td>`;
  }
  html += '</tr>';
}
document.getElementById('cells').innerHTML = html + '</tbody>';
```
